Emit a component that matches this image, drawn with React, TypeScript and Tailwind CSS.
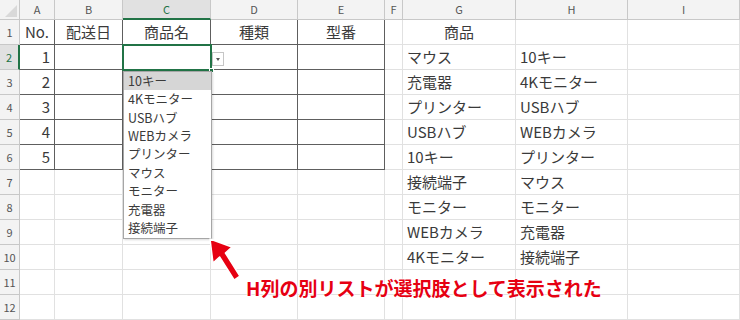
const COLS = ['A', 'B', 'C', 'D', 'E', 'F', 'G', 'H', 'I']

const G_LIST = ['マウス', '充電器', 'プリンター', 'USBハブ', '10キー', '接続端子', 'モニター', 'WEBカメラ', '4Kモニター']
const H_LIST = ['10キー', '4Kモニター', 'USBハブ', 'WEBカメラ', 'プリンター', 'マウス', 'モニター', '充電器', '接続端子']

const HEADER_ROW: Record<string, string> = { A: 'No.', B: '配送日', C: '商品名', D: '種類', E: '型番', G: '商品' }

function cellValue(row: number, col: string): { text: string; align: 'left' | 'center' | 'right' } {
  if (row === 1) {
    return { text: HEADER_ROW[col] ?? '', align: 'center' }
  }
  if (col === 'A' && row >= 2 && row <= 6) return { text: String(row - 1), align: 'right' }
  if (col === 'G' && row >= 2 && row <= 10) return { text: G_LIST[row - 2], align: 'left' }
  if (col === 'H' && row >= 2 && row <= 10) return { text: H_LIST[row - 2], align: 'left' }
  return { text: '', align: 'left' }
}

function Cell({ row, col }: { row: number; col: string }) {
  const inTable = row <= 6 && ['A', 'B', 'C', 'D', 'E'].includes(col)
  const { text, align } = cellValue(row, col)
  return (
    <div
      className={`flex items-center overflow-visible whitespace-nowrap border-r border-b text-[15px] text-[#3a3a3a] ${
        inTable ? 'border-[#5e5e5e]' : 'border-[#e1e1e1]'
      } ${align === 'right' ? 'justify-end pr-1' : align === 'center' ? 'justify-center' : 'justify-start pl-1'}`}
    >
      {text}
    </div>
  )
}

function Dropdown() {
  return (
    <div className="absolute left-[123px] top-[71px] w-[89px] border border-[#a6a6a6] bg-white shadow-[1px_1px_2px_rgba(0,0,0,0.15)]">
      {H_LIST.map((item, i) => (
        <div
          key={item}
          className={`flex h-[18.4px] items-center pl-[4px] text-[12.5px] text-[#3a3a3a] ${i === 0 ? 'bg-[#d6d6d6]' : ''}`}
        >
          {item}
        </div>
      ))}
    </div>
  )
}

function Arrow() {
  return (
    <svg className="absolute left-0 top-0" width="740" height="320" viewBox="0 0 740 320">
      <polygon
        points="210,239 232,247 225.4,253 239.9,276 234.1,280 219.6,257 213,263"
        fill="#e60012"
        stroke="#ffffff"
        strokeWidth="1.5"
        strokeLinejoin="round"
      />
    </svg>
  )
}

export default function App() {
  return (
    <div className="relative h-[320px] w-[740px] overflow-hidden bg-white font-['Noto_Sans_CJK_JP',sans-serif]">
      <div className="grid grid-cols-[20px_35px_68px_88px_87px_87px_18px_113px_112px_112px] grid-rows-[20px_repeat(12,25px)]">
        <div className="flex items-end justify-end border-r border-b border-[#c8c8c8] bg-[#f3f3f3] p-[2px]">
          <svg width="12" height="12" viewBox="0 0 12 12">
            <polygon points="12,0 12,12 0,12" fill="#d9d9d9" />
          </svg>
        </div>
        {COLS.map((c) => (
          <div
            key={c}
            className={`flex items-center justify-center text-[11px] ${
              c === 'C'
                ? 'border-r border-b-2 border-r-[#c8c8c8] border-b-[#217346] bg-[#e1e1e1] text-[#217346]'
                : 'border-r border-b border-[#c8c8c8] bg-[#f3f3f3] text-[#555]'
            }`}
          >
            {c}
          </div>
        ))}
        {Array.from({ length: 12 }, (_, i) => i + 1).map((r) => (
          <Row key={r} row={r} />
        ))}
      </div>

      <div className="absolute left-[122px] top-[44px] h-[27px] w-[90px] border-2 border-[#217346]" />
      <div className="absolute left-[209px] top-[68px] h-[5px] w-[5px] border border-white bg-[#217346]" />

      <div className="absolute left-[212px] top-[52px] flex h-[14px] w-[12px] items-center justify-center border border-[#c6c6c6] bg-white">
        <div className="h-0 w-0 border-x-[2.5px] border-t-[3px] border-x-transparent border-t-[#555]" />
      </div>

      <Dropdown />
      <Arrow />

      <div className="absolute left-[246px] top-[276px] whitespace-nowrap text-[19px] font-bold leading-[24px] text-[#e60012] [text-shadow:0_0_2px_#fff,0_0_2px_#fff,0_0_2px_#fff]">
        H列の別リストが選択肢として表示された
      </div>
    </div>
  )
}

function Row({ row }: { row: number }) {
  return (
    <>
      <div
        className={`flex items-center justify-center text-[11px] ${
          row === 2
            ? 'border-r-2 border-b border-r-[#217346] border-b-[#c8c8c8] bg-[#e1e1e1] text-[#217346]'
            : 'border-r border-b border-[#c8c8c8] bg-[#f3f3f3] text-[#555]'
        }`}
      >
        {row}
      </div>
      {COLS.map((c) => (
        <Cell key={c} row={row} col={c} />
      ))}
    </>
  )
}
